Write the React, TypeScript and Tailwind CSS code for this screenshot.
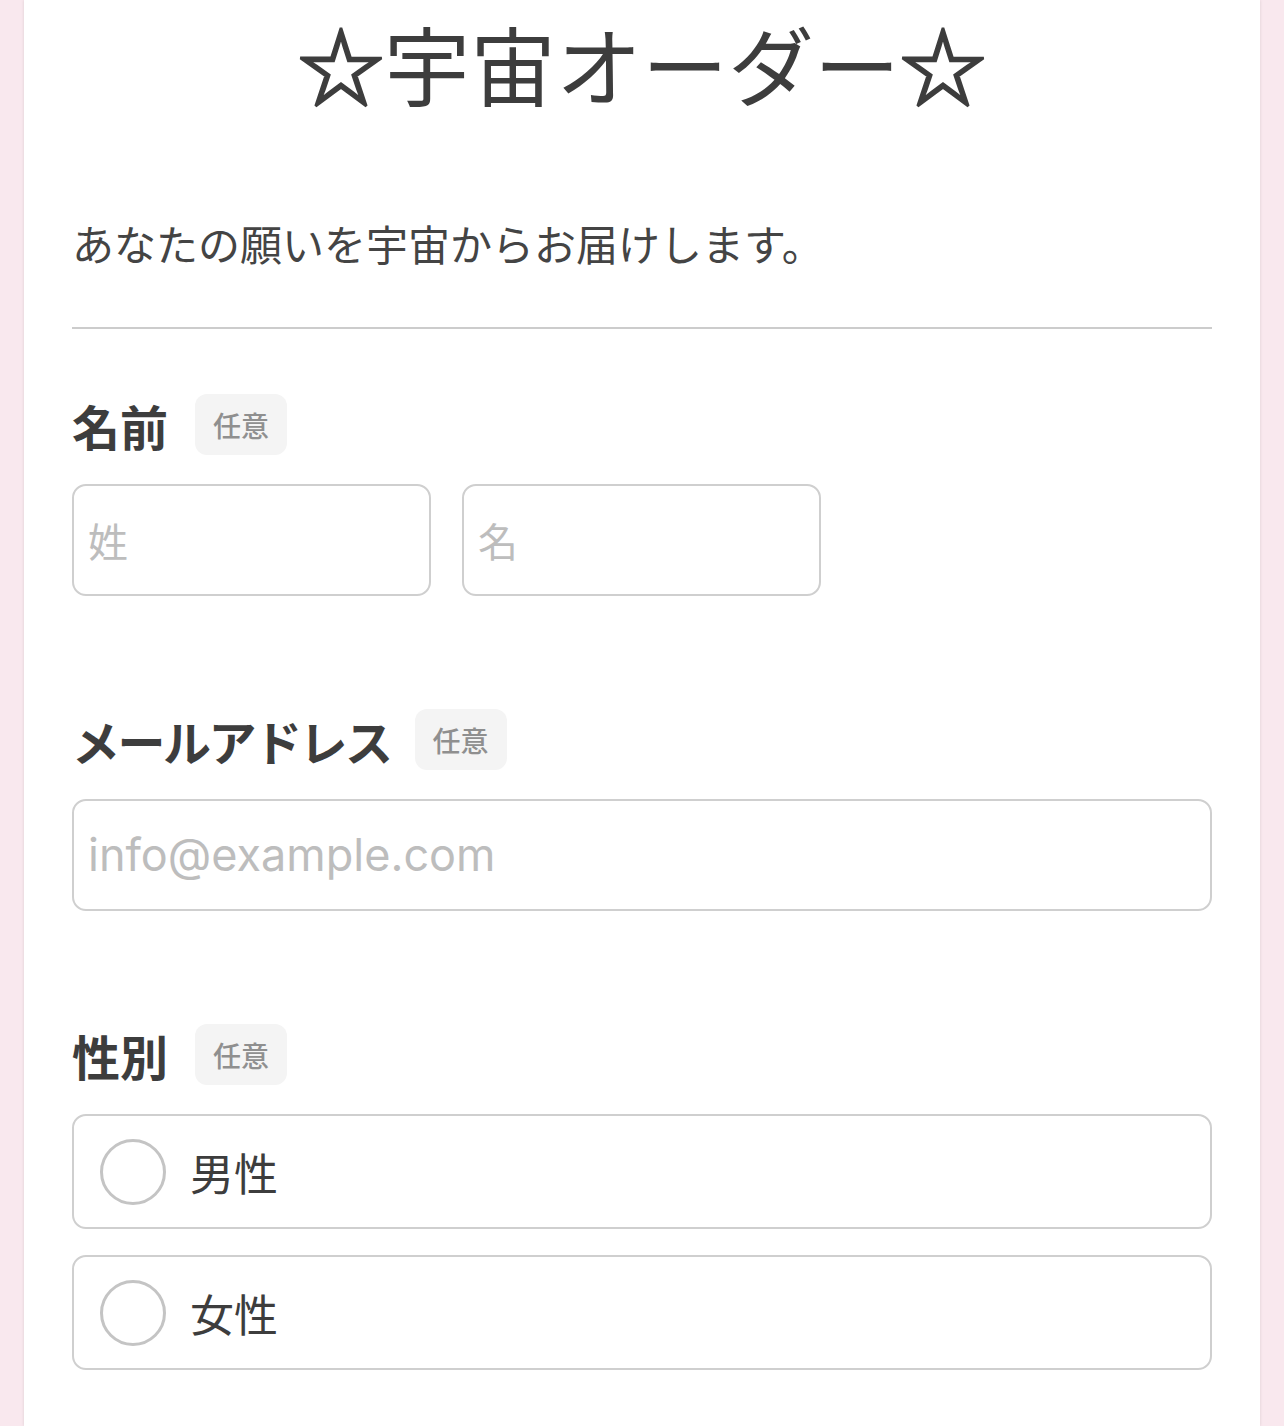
import React from "react";

const font = { fontFamily: '"Noto Sans CJK JP", "Noto Sans", sans-serif' };

function Badge({ ml = "ml-[27px]" }: { ml?: string }) {
  return (
    <span className={`${ml} inline-flex h-[61px] w-[92px] items-center justify-center rounded-[12px] bg-[#f4f4f4] text-[28px] font-medium text-[#8f8f8f]`}>
      任意
    </span>
  );
}

function Label({ text, tight = false }: { text: string; tight?: boolean }) {
  return (
    <div className="flex items-center">
      <span
        className={
          tight
            ? "text-[48px] font-bold leading-none tracking-[-2.5px] text-[#3d3d3d]"
            : "text-[48px] font-bold leading-none text-[#3d3d3d]"
        }
      >
        {text}
      </span>
      <Badge ml={tight ? "ml-[24px]" : "ml-[27px]"} />
    </div>
  );
}

function Radio({ text }: { text: string }) {
  return (
    <label className="flex h-[115px] w-full items-center rounded-[14px] border-2 border-[#cfcfcf] bg-white pl-[26px]">
      <span className="h-[66px] w-[66px] shrink-0 rounded-full border-[3px] border-[#c4c4c4]" />
      <span className="ml-[24px] text-[44px] leading-none text-[#3d3d3d]">{text}</span>
    </label>
  );
}

function Star() {
  return <span className="[-webkit-text-stroke:2.5px_#3d3d3d]">☆</span>;
}

export default function App() {
  return (
    <div className="min-h-[1426px] w-[1284px] overflow-hidden bg-[#f9e8ee]" style={font}>
      <div className="mx-auto h-[1426px] w-[1236px] bg-white px-[48px] shadow-[0_0_3px_rgba(0,0,0,0.12)]">
        <h1 className="pt-[0px] text-center text-[86px] font-normal leading-[125px] text-[#3d3d3d]">
          <Star />宇宙オーダー<Star />
        </h1>
        <p className="mt-[97px] text-[42px] leading-none text-[#444]">あなたの願いを宇宙からお届けします。</p>
        <div className="mt-[63px] h-[2px] w-full bg-[#cccccc]" />
        <div className="mt-[65px]">
          <Label text="名前" />
          <div className="mt-[29px] flex gap-[31px]">
            <div className="flex h-[112px] w-[359px] items-center rounded-[14px] border-2 border-[#cfcfcf] pl-[14px] text-[40px] text-[#bdbdbd]">
              姓
            </div>
            <div className="flex h-[112px] w-[359px] items-center rounded-[14px] border-2 border-[#cfcfcf] pl-[14px] text-[40px] text-[#bdbdbd]">
              名
            </div>
          </div>
        </div>
        <div className="mt-[113px]">
          <Label text="メールアドレス" tight />
          <div
            className="mt-[29px] flex h-[112px] w-full items-center rounded-[14px] border-2 border-[#cfcfcf] pl-[14px] text-[45px] text-[#bdbdbd]"
            style={{ fontFamily: 'Inter, "Noto Sans", sans-serif' }}
          >
            info@example.com
          </div>
        </div>
        <div className="mt-[113px]">
          <Label text="性別" />
          <div className="mt-[29px] flex flex-col gap-[26px]">
            <Radio text="男性" />
            <Radio text="女性" />
          </div>
        </div>
      </div>
    </div>
  );
}
